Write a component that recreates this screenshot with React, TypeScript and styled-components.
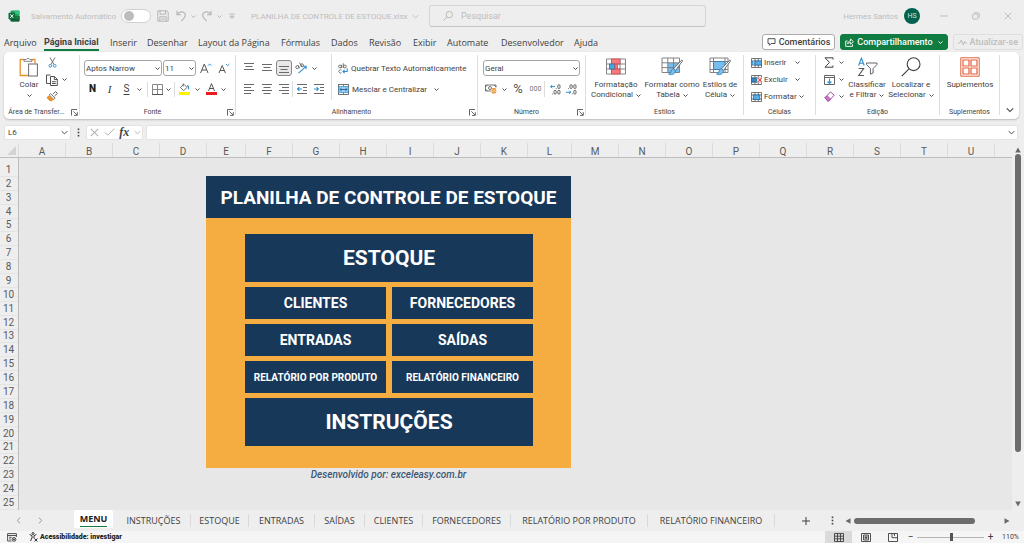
import React from "react";
import styled, { createGlobalStyle, css } from "styled-components";

const ui = `"Open Sans", "Noto Sans", sans-serif`;
const compact = `Roboto, "Open Sans", sans-serif`;

const c = {
  chrome: "#eeeeee",
  sheet: "#e7e7e7",
  line: "#bdbdbd",
  soft: "#dcdcdc",
  text: "#3f3f3f",
  faded: "#bdbdbd",
  green: "#107c41",
  navy: "#18385a",
  orange: "#f5ad41",
  blue: "#2f8fd0",
};

const Global = createGlobalStyle`
  *, *::before, *::after { box-sizing: border-box; }
  html, body { margin: 0; background: ${c.chrome}; }
  body { font-family: ${compact}; font-size: 8px; color: ${c.text}; }
  button, input, select { font: inherit; color: inherit; margin: 0; padding: 0; }
  button { background: none; border: 0; cursor: pointer; }
  svg { display: block; flex: none; }
`;

const Window = styled.div`
  display: flex;
  flex-direction: column;
  min-height: 100vh;
  overflow: hidden;
`;

/* ---------- title bar ---------- */
const TitleBar = styled.header`
  display: flex;
  align-items: center;
  height: 32px;
  padding: 0 8px;
  color: ${c.faded};
`;
const AutoSave = styled.label`
  display: flex;
  align-items: center;
  justify-content: space-between;
  width: 120px;
  margin-left: 11px;
`;
const Switch = styled.input`
  appearance: none;
  width: 30px;
  height: 14px;
  border: 1px solid #d0d0d0;
  border-radius: 7px;
  background: #fff;
  &::before {
    content: "";
    display: block;
    width: 10px;
    height: 10px;
    margin: 1px 2px;
    border-radius: 50%;
    background: #bcbcbc;
  }
`;
const QuickTools = styled.div`
  display: flex;
  align-items: center;
  width: 100px;
  color: #b4b4b4;
`;
const FileName = styled.button`
  display: flex;
  align-items: center;
  gap: 4px;
  width: 178px;
  white-space: nowrap;
`;
const Search = styled.label`
  display: flex;
  align-items: center;
  gap: 8px;
  width: 277px;
  height: 22px;
  padding: 0 13px;
  border: 1px solid #d6d6d6;
  border-bottom-color: #c4c4c4;
  border-radius: 3px;
  color: #b4b4b4;
  input {
    flex: 1;
    min-width: 0;
    border: 0;
    background: none;
    outline: 0;
    font-size: 9px;
  }
  input::placeholder { color: ${c.faded}; opacity: 1; }
`;
const Account = styled.button`
  display: flex;
  align-items: center;
  gap: 6px;
  margin-left: auto;
`;
const Avatar = styled.span`
  display: grid;
  place-items: center;
  width: 16px;
  height: 16px;
  border-radius: 50%;
  background: #03624f;
  color: #cfe6df;
  font-size: 7px;
`;
const WindowButton = styled.button`
  display: grid;
  place-items: center;
  width: 32px;
  height: 24px;
`;
const WindowButtons = styled.div`
  display: flex;
  margin: 0 -8px 0 8px;
`;

/* ---------- ribbon tabs ---------- */
const TabBar = styled.nav`
  display: flex;
  align-items: center;
  height: 20px;
  padding: 0 1px 0 4px;
  font-family: ${ui};
  font-size: 9px;
`;
const RibbonTab = styled.button<{ $w: number; $on?: boolean }>`
  width: ${(p) => p.$w}px;
  height: 20px;
  text-align: left;
  white-space: nowrap;
  ${(p) => p.$on && css`font-family: ${compact}; font-weight: 700;`}
  span {
    display: inline-block;
    height: 17px;
    line-height: 17px;
    margin-top: 1px;
    border-bottom: 2px solid ${(p) => (p.$on ? c.green : "transparent")};
  }
`;
const TabActions = styled.div`
  display: flex;
  gap: 5px;
  margin-left: auto;
  font-family: ${compact};
`;
const ActionButton = styled.button<{ $kind?: "primary" | "muted" }>`
  display: flex;
  align-items: center;
  gap: 3px;
  height: 16px;
  padding: 0 4px;
  border: 1px solid #ababab;
  border-radius: 3px;
  background: #fff;
  white-space: nowrap;
  font-weight: 500;
  svg:last-child:not(:first-child) { margin-left: 2px; }
  ${(p) => p.$kind === "primary" && css`
    background: ${c.green};
    border-color: ${c.green};
    color: #fff;
  `}
  ${(p) => p.$kind === "muted" && css`
    background: none;
    border-color: #dedede;
    color: ${c.faded};
  `}
`;

/* ---------- ribbon ---------- */
const Ribbon = styled.section`
  display: flex;
  height: 67px;
  margin: 0 5px 0 4px;
  border-radius: 5px;
  background: #fff;
  box-shadow: 0 1px 2px rgba(0, 0, 0, 0.22);
`;
const Group = styled.section<{ $w: number }>`
  display: flex;
  flex-direction: column;
  flex: none;
  width: ${(p) => p.$w}px;
  position: relative;
  &::after {
    content: "";
    position: absolute;
    right: 0;
    top: 3px;
    bottom: 4px;
    width: 1px;
    background: #dedede;
  }
`;
const GroupBody = styled.div<{ $pad?: number }>`
  display: flex;
  height: 53px;
  padding: 2px 0 0 ${(p) => p.$pad ?? 0}px;
`;
const GroupLabel = styled.footer`
  display: flex;
  align-items: center;
  height: 14px;
  padding-right: 1px;
  font-size: 7px;
  line-height: 14px;
  span { flex: 1; text-align: center; white-space: nowrap; }
`;
const Launcher = styled.button`
  display: grid;
  place-items: center;
  width: 10px;
  height: 12px;
  color: #555;
`;
/* Two-row groups sit lower than the dense three-row ones. */
const Stack = styled.div<{ $dense?: boolean; $pad?: number }>`
  display: flex;
  flex-direction: column;
  gap: ${(p) => (p.$dense ? 0 : 1)}px;
  padding: ${(p) => (p.$dense ? 0 : 4)}px 0 0 ${(p) => p.$pad ?? 0}px;
`;
const Row = styled.div<{ $h?: number }>`
  display: flex;
  align-items: center;
  height: ${(p) => p.$h ?? 20}px;
`;
const Tool = styled.button<{ $w?: number; $on?: boolean }>`
  display: flex;
  align-items: center;
  justify-content: center;
  width: ${(p) => p.$w ?? 18}px;
  height: 16px;
  border-radius: 3px;
  ${(p) => p.$on && css`
    border: 1px solid #8a8a8a;
    background: #e8e8e8;
  `}
`;
const Letter = styled.span<{ $kind?: "bold" | "italic" | "underline" | "percent" | "zeros" }>`
  font-size: 10px;
  line-height: 12px;
  ${(p) => p.$kind === "bold" && css`font-weight: 900; color: #222;`}
  ${(p) => p.$kind === "italic" && css`font-family: "Liberation Serif", serif; font-style: italic; font-size: 11px;`}
  ${(p) => p.$kind === "underline" && css`text-decoration: underline; text-underline-offset: 2px;`}
  ${(p) => p.$kind === "percent" && css`font-size: 13px; color: #555;`}
  ${(p) => p.$kind === "zeros" && css`font-size: 7px; color: #777;`}
`;
const Divider = styled.span<{ $h?: number; $tight?: boolean }>`
  width: 1px;
  height: ${(p) => p.$h ?? 15}px;
  margin: 0 4px 0 ${(p) => (p.$tight ? 0 : 4)}px;
  background: #dcdcdc;
`;
const TextTool = styled.button<{ $w: number; $dense?: boolean }>`
  display: flex;
  align-items: center;
  gap: ${(p) => (p.$dense ? 2 : 3)}px;
  height: ${(p) => (p.$dense ? 17 : 20)}px;
  width: ${(p) => p.$w}px;
  white-space: nowrap;
  svg:last-child:not(:first-child) { margin-left: auto; }
`;
const BigTool = styled.button<{ $w: number }>`
  display: flex;
  flex-direction: column;
  align-items: center;
  width: ${(p) => p.$w}px;
  padding-top: 3px;
  line-height: 10px;
  white-space: nowrap;
  > svg { height: 20px; margin-bottom: 3px; }
  span { display: flex; align-items: center; justify-content: center; gap: 3px; height: 10px; }
`;
const SelectBox = styled.label<{ $w: number }>`
  position: relative;
  display: block;
  width: ${(p) => p.$w}px;
  margin-right: 1px;
  select {
    appearance: none;
    display: block;
    width: 100%;
    height: 16px;
    padding: 0 12px 0 1px;
    border: 1px solid #a6a6a6;
    border-radius: 3px;
    background: #fff;
  }
  svg { position: absolute; right: 2px; top: 6px; pointer-events: none; }
`;
const Collapse = styled.button`
  align-self: flex-end;
  display: grid;
  place-items: center;
  width: 20px;
  height: 18px;
  margin-left: auto;
`;

/* ---------- formula bar ---------- */
const FormulaBar = styled.div`
  display: flex;
  align-items: center;
  gap: 3px;
  height: 24px;
  padding: 2px 6px 0 4px;
`;
const Field = styled.div<{ $w?: number }>`
  display: flex;
  align-items: center;
  justify-content: space-between;
  height: 15px;
  padding: 0 2px 0 3px;
  border: 1px solid #e3e3e3;
  border-radius: 2px;
  background: #fff;
  ${(p) => (p.$w ? `width: ${p.$w}px;` : "flex: 1;")}
  input {
    flex: 1;
    min-width: 0;
    border: 0;
    outline: 0;
    background: none;
  }
`;
const FormulaActions = styled(Field)`
  padding: 0 1px 0 3px;
  color: #b3b3b3;
`;
const Grip = styled.span`
  display: grid;
  place-items: center;
  width: 9px;
`;
const Fx = styled.span`
  font: italic 700 12px/12px "Liberation Serif", serif;
  color: #444;
`;

/* ---------- worksheet ---------- */
const Workspace = styled.main`
  display: flex;
  flex: 1;
`;
const Sheet = styled.div`
  flex: 1;
  min-width: 0;
  display: flex;
  flex-direction: column;
`;
const ColumnHeads = styled.div`
  display: flex;
  height: 15px;
  border-bottom: 1px solid ${c.line};
  overflow: hidden;
  font-size: 10px;
  line-height: 17px;
  color: #5a5a5a;
`;
const Corner = styled.div`
  display: flex;
  align-items: center;
  justify-content: flex-end;
  flex: none;
  width: 19px;
  padding-right: 2px;
  border-right: 1px solid ${c.soft};
`;
const ColumnHead = styled.div<{ $w: number }>`
  flex: none;
  width: ${(p) => p.$w}px;
  border-right: 1px solid ${c.soft};
  text-align: center;
`;
const Body = styled.div`
  display: flex;
  flex: 1;
`;
const RowHeads = styled.div`
  display: flex;
  flex-direction: column;
  width: 19px;
  padding-top: 5px;
  border-right: 1px solid ${c.line};
  font-size: 10px;
  color: #5a5a5a;
`;
const RowHead = styled.div`
  display: flex;
  flex: 1;
  align-items: center;
  justify-content: center;
  min-height: 13px;
  padding-right: 1px;
  border-bottom: 1px solid #e4e4e4;
`;
const Cells = styled.div`
  flex: 1;
  padding: 18px 0 0 187px;
  background: ${c.sheet};
`;
const Panel = styled.section`
  width: 365px;
  background: ${c.orange};
`;
const PanelTitle = styled.h1`
  margin: 0;
  height: 42px;
  line-height: 44px;
  background: ${c.navy};
  color: #fff;
  text-align: center;
  font-size: 19px;
  font-weight: 700;
  white-space: nowrap;
`;
const PanelGrid = styled.nav`
  display: grid;
  grid-template-columns: 1fr 1fr;
  gap: 5px 6px;
  padding: 16px 38px 22px 39px;
`;
const PanelButton = styled.button<{ $size: "large" | "medium" | "small" }>`
  background: ${c.navy};
  color: #fff;
  font-weight: 700;
  height: 32px;
  font-size: ${(p) => ({ large: 21, medium: 14, small: 10 })[p.$size]}px;
  white-space: nowrap;
  ${(p) => p.$size === "large" && css`grid-column: 1 / -1; height: 48px;`}
`;
const Credit = styled.p`
  width: 365px;
  margin: 0;
  text-align: center;
  font-size: 10px;
  line-height: 14px;
  font-style: italic;
  font-weight: 500;
  color: #3c5775;
`;
const VScroll = styled.div`
  display: flex;
  flex-direction: column;
  align-items: center;
  width: 12px;
  padding: 4px 0 3px;
  color: #686868;
`;
const VTrack = styled.div`
  flex: 1;
  width: 6px;
  margin: 1px 0;
`;
const VThumb = styled.div`
  width: 6px;
  height: 86%;
  border-radius: 3px;
  background: #6c6c6c;
`;

/* ---------- sheet tabs ---------- */
const SheetBar = styled.nav`
  display: flex;
  align-items: center;
  height: 21px;
  padding: 0 14px 0 13px;
  font-family: ${ui};
  font-size: 9px;
`;
const Arrow = styled.button`
  display: grid;
  place-items: center;
  width: 10px;
  height: 14px;
  margin-right: 12px;
  color: #9a9a9a;
`;
const SheetTab = styled.button<{ $w: number; $on?: boolean }>`
  width: ${(p) => p.$w}px;
  height: 13px;
  line-height: 13px;
  border-right: 1px solid #d9d9d9;
  white-space: nowrap;
  ${(p) => p.$on && css`
    align-self: flex-start;
    height: 18px;
    margin: 0 4px 0 17px;
    border: 0;
    border-radius: 2px;
    background: #fff;
    font-weight: 700;
    color: #222;
    span { display: inline-block; height: 15px; border-bottom: 1px solid ${c.green}; }
  `}
`;
const HScroll = styled.div`
  display: flex;
  align-items: center;
  gap: 3px;
  width: 165px;
  color: #686868;
`;
const HTrack = styled.div`flex: 1;`;
const HThumb = styled.div`
  width: 82%;
  height: 6px;
  border-radius: 3px;
  background: #6c6c6c;
`;
const BarButton = styled.button`
  display: grid;
  place-items: center;
  width: 26px;
  height: 14px;
`;
const SheetTools = styled.div`
  display: flex;
  align-items: center;
  margin-left: auto;
`;

/* ---------- status bar ---------- */
const StatusBar = styled.footer`
  display: flex;
  align-items: center;
  height: 12px;
  padding: 0 5px 0 7px;
  background: #f5f5f5;
`;
const Accessibility = styled.button`
  display: flex;
  align-items: center;
  gap: 2px;
  margin-left: 12px;
  font-size: 7px;
  font-weight: 900;
  color: #222;
`;
const Views = styled.div`
  display: flex;
  margin-left: auto;
`;
const ViewButton = styled.button<{ $on?: boolean }>`
  display: grid;
  place-items: center;
  width: 27px;
  height: 12px;
  background: ${(p) => (p.$on ? "#dadada" : "none")};
`;
const Zoom = styled.div`
  display: flex;
  align-items: center;
  gap: 2px;
  font-size: 7px;
  input {
    appearance: none;
    width: 67px;
    height: 10px;
    background: linear-gradient(#b4b4b4, #b4b4b4) center / 100% 1px no-repeat;
  }
  input::-webkit-slider-thumb {
    appearance: none;
    width: 3px;
    height: 8px;
    background: #555;
  }
`;
const ZoomStep = styled.button`
  width: 9px;
  line-height: 10px;
  font-size: 10px;
`;
const ZoomValue = styled.output`
  width: 22px;
  text-align: right;
`;

/* ---------- icons ---------- */
const line = { fill: "none", stroke: "currentColor", strokeWidth: 1 } as const;

const Chevron = ({ s = 5 }: { s?: number }) => (
  <svg width={s} height={s} viewBox="0 0 6 6" {...line}><path d="M.6 1.8 3 4.2 5.4 1.8" strokeWidth={s > 6 ? 0.8 : 1.1} /></svg>
);
const Triangle = ({ d }: { d: string }) => (
  <svg width="6" height="6" viewBox="0 0 6 6" fill="currentColor"><path d={d} /></svg>
);
const LauncherIcon = () => (
  <svg width="7" height="7" viewBox="0 0 7 7" {...line} strokeWidth={0.9}>
    <path d="M.5 6.5V.5h5.5M2.4 2.4 6 6M6.3 3.2v3.2H3.1" />
  </svg>
);
const ExcelLogo = () => (
  <svg width="12" height="12" viewBox="0 0 12 12">
    <rect x="2.5" y=".5" width="9" height="11" rx="1" fill="#21a366" />
    <path d="M7 .5h3.5a1 1 0 0 1 1 1V4H7z" fill="#33c481" />
    <path d="M2.5 6.2h9v4.3a1 1 0 0 1-1 1h-7a1 1 0 0 1-1-1z" fill="#185c37" />
    <path d="M7 6.2h4.5V9H7z" fill="#107c41" />
    <rect x=".5" y="2.8" width="6.6" height="6.6" rx=".8" fill="#0b6b38" />
    <path d="m2.3 4.3 3 3.6m0-3.6-3 3.6" stroke="#fff" strokeWidth="1" />
  </svg>
);
const SaveIcon = () => (
  <svg width="12" height="12" viewBox="0 0 12 12" {...line}>
    <path d="M.8.8h9l1.4 1.4v9H.8zM3 .8v3.4h5.6V.8M2.8 11.2V6.8h6.4v4.4M4 9h4" />
  </svg>
);
const UndoIcon = ({ flip }: { flip?: boolean }) => (
  <svg width="11" height="12" viewBox="0 0 11 12" {...line} strokeWidth={1.1}>
    <path d={flip ? "M10 .8v4H6M10 4.6C7.8 1.2 3.8 1.2 2.2 3.4.8 5.6 2 7.8 5.6 11" : "M1 .8v4h4M1 4.6C3.2 1.2 7.2 1.2 8.8 3.4 10.2 5.6 9 7.8 5.4 11"} />
  </svg>
);
const CustomizeIcon = () => (
  <svg width="6" height="7" viewBox="0 0 6 7" {...line}><path d="M.5 1h5M1 3.2l2 2.2 2-2.2z" /></svg>
);
const SearchIcon = ({ size = 10 }: { size?: number }) => (
  <svg width={size} height={size} viewBox="0 0 20 20" {...line} strokeWidth={size > 12 ? 1.1 : 1.8}>
    <circle cx="12.6" cy="7.2" r="6.4" /><path d="M8 11.8.8 19.2" />
  </svg>
);
const RestoreIcon = () => (
  <svg width="8" height="8" viewBox="0 0 8 8" {...line}>
    <rect x=".7" y="2" width="5.2" height="5.2" rx="1" /><path d="M2.4.8h3.2A1.7 1.7 0 0 1 7.3 2.5V5.6" />
  </svg>
);
const CloseIcon = ({ s = 7 }: { s?: number }) => (
  <svg width={s} height={s} viewBox="0 0 8 8" {...line}><path d="m.7.7 6.6 6.6m0-6.6L.7 7.3" /></svg>
);
const CommentIcon = () => (
  <svg width="9" height="8" viewBox="0 0 8 8" {...line} strokeWidth={0.9}><path d="M.5.7h7v4.8H3.6L1.9 7.3V5.5H.5z" /></svg>
);
const ShareIcon = () => (
  <svg width="9" height="9" viewBox="0 0 9 9" {...line} strokeWidth={0.9}>
    <path d="M2.6 3H.7v5.4h6.8V6.2M2.6 6C2.8 4 4 3 5.6 3V1l2.8 2.7-2.8 2.5V4.6C4.2 4.5 3.3 5 2.6 6z" />
  </svg>
);
const PulseIcon = () => (
  <svg width="9" height="7" viewBox="0 0 9 7" {...line}><path d="M0 4h1.8L3.3 1l2 5 1.4-3.5L7.4 4H9" /></svg>
);
const PasteIcon = () => (
  <svg width="20" height="20" viewBox="0 0 20 20" fill="none">
    <path d="M5 2.5H1.2v16H10M13 2.5h3v4" stroke="#e8912d" strokeWidth="1.3" />
    <path d="M5 4.3V2.5h2.2a2 2 0 0 1 3.6 0H13v1.8z" fill="#fff" stroke="#777" strokeWidth=".9" />
    <rect x="9.6" y="7" width="8.8" height="12" fill="#fff" stroke="#6b6b6b" strokeWidth="1" />
  </svg>
);
const CutIcon = () => (
  <svg width="9" height="11" viewBox="0 0 9 11" fill="none" strokeWidth=".9">
    <path d="M2 .5 6 7.5M7 .5 3 7.5" stroke="#666" />
    <circle cx="2.3" cy="8.8" r="1.4" stroke={c.blue} /><circle cx="6.7" cy="8.8" r="1.4" stroke={c.blue} />
  </svg>
);
const CopyIcon = () => (
  <svg width="12" height="12" viewBox="0 0 12 12" {...line} strokeWidth={0.9}>
    <path d="M4.5 9.5h-4V1h4M4.5 2.5h4l2.8 2.8v6.2H4.5zM8.3 2.6v2.9h3M6 7.7h3.8M6 9.5h3.8" />
  </svg>
);
const BrushIcon = () => (
  <svg width="12" height="11" viewBox="0 0 12 11" fill="none">
    <path d="M6.8 3.2 9.6.6l1.8 1.8-2.8 2.6" stroke="#666" strokeWidth="1" />
    <path d="M4.5 2.6 9.2 7.2l-1.4 1.2L3.2 3.9z" fill="#fff" stroke="#666" strokeWidth=".9" />
    <path d="M3.2 4.2 7.6 8.5 5.4 10.6C3.5 10 1.5 8.5.6 6.3z" fill="#e8912d" />
  </svg>
);
const GrowFont = ({ down }: { down?: boolean }) => (
  <svg width="12" height="11" viewBox="0 0 12 11" fill="none">
    <path d={down ? "M1 10 4.2 2.5 7.4 10M2.2 7.5h4" : "M.6 10 4.3 1 8 10M2 7h4.6"} stroke="#555" strokeWidth="1" />
    <path d={down ? "m8 1 1.7 1.7L11.4 1" : "m8 2.7 1.7-1.7 1.7 1.7"} stroke={c.blue} strokeWidth="1" />
  </svg>
);
const BordersIcon = () => (
  <svg width="11" height="11" viewBox="0 0 11 11" {...line}>
    <path d="M.5.5h10v10H.5zM5.5.5v10M.5 5.5h10" stroke="#888" /><path d="M0 10.5h11" stroke="#555" />
  </svg>
);
const FillIcon = () => (
  <svg width="11" height="12" viewBox="0 0 11 12" fill="none">
    <path d="M4.8 1.2 8 4.4 4.6 7.6 1.4 4.4zM4.2.4v3" stroke="#666" strokeWidth=".9" />
    <path d="M8.2 2.2c1.2.6 1.6 1.8 1.3 4.2" stroke={c.blue} strokeWidth="1.2" />
    <rect y="9" width="11" height="3" fill="#fff200" />
  </svg>
);
const FontColorIcon = () => (
  <svg width="11" height="12" viewBox="0 0 11 12" fill="none">
    <path d="M2.5 8 5.5.6 8.5 8M3.6 5.5h3.8" stroke="#555" strokeWidth="1" />
    <rect y="9" width="11" height="3" fill="#f01818" />
  </svg>
);
const Lines = ({ rows }: { rows: [number, number, number][] }) => (
  <svg width="10" height="10" viewBox="0 0 10 10" fill="none" stroke="#6a6a6a" strokeWidth="1">
    <path d={rows.map(([y, a, b]) => `M${a} ${y}H${b}`).join("")} />
  </svg>
);
const OrientationIcon = () => (
  <svg width="12" height="12" viewBox="0 0 12 12" fill="none">
    <g stroke="#666" strokeWidth=".9"><circle cx="2.3" cy="5.2" r="1.5" /><path d="M3 3.2l1.6 3M4.5.6l2.7 4.6" /><circle cx="7" cy="3.2" r="1.4" /></g>
    <path d="M3.5 11.2 10.8 4.6M8 4.3h3.1v3" stroke={c.blue} strokeWidth="1.1" />
  </svg>
);
const IndentIcon = ({ out }: { out?: boolean }) => (
  <svg width="10" height="10" viewBox="0 0 10 10" fill="none">
    <path d="M0 .5h10M6 3.5h4M6 6.5h4M0 9.5h10" stroke="#6a6a6a" strokeWidth="1" />
    <path d={out ? "M5 5H.6M2.4 3.2.6 5l1.8 1.8" : "M0 5h4.4M2.6 3.2 4.4 5 2.6 6.8"} stroke={c.blue} strokeWidth="1.1" />
  </svg>
);
const WrapIcon = () => (
  <svg width="10" height="11" viewBox="0 0 10 11" fill="none">
    <g stroke="#666" strokeWidth=".9"><circle cx="2" cy="3.5" r="1.4" /><path d="M3.6 1.8v3.3M5.3.3v4.8" /><circle cx="6.9" cy="3.5" r="1.4" /><path d="M3.5 7.2a1.6 1.6 0 1 0 0 2.5" /></g>
    <path d="M9.2 5.5v3H5M6.6 6.8 5 8.5l1.6 1.7" stroke={c.blue} strokeWidth="1.1" />
  </svg>
);
const MergeIcon = () => (
  <svg width="11" height="11" viewBox="0 0 11 11" fill="none">
    <rect x=".5" y=".5" width="10" height="10" stroke="#666" strokeWidth=".9" />
    <path d="M5.5.5v2M5.5 8.5v2" stroke="#666" strokeWidth=".9" />
    <rect x=".9" y="2.6" width="9.2" height="5.8" fill="#9ed0f2" stroke="#2f8fd0" strokeWidth=".7" />
    <path d="M2 5.5h7M3.6 4 2 5.5 3.6 7M7.4 4 9 5.5 7.4 7" stroke="#1b5f92" strokeWidth=".9" />
  </svg>
);
const CurrencyIcon = () => (
  <svg width="12" height="10" viewBox="0 0 12 10" fill="none">
    <path d="M6 7H.5V1H11v2.5M2.5 1 .5 3M2.5 7 .5 5M9 1l2 2" stroke="#666" strokeWidth=".9" /><circle cx="5" cy="4" r="1.5" stroke="#666" strokeWidth=".9" />
    <path d="M6.5 5c0-1.3 4.7-1.3 4.7 0v3.5c0 1.3-4.7 1.3-4.7 0z" fill="#ee9433" />
    <path d="M6.5 5.3c0 1 4.7 1 4.7 0M6.5 7c0 1 4.7 1 4.7 0" stroke="#fff" strokeWidth=".5" />
  </svg>
);
const Zero = ({ x, y }: { x: number; y: number }) => <rect x={x} y={y} width="2.2" height="3.8" rx="1.1" />;
const DecimalIcon = ({ less }: { less?: boolean }) => (
  <svg width="11" height="11" viewBox="0 0 11 11" fill="none">
    <g stroke="#555" strokeWidth=".9">
      <Zero x={7.8} y={0.7} />
      <Zero x={7.8} y={6.3} />
      <Zero x={4} y={less ? 0.7 : 6.3} />
      <path d={less ? "M2 4.5h.8M5.8 10h.8" : "M5.8 4.5h.8M2 10h.8"} />
    </g>
    <path d={less ? "M0 8.3h4.8M3.2 6.7l1.6 1.6-1.6 1.6" : "M5 2.6H.5M2.2 1 .6 2.6l1.6 1.6"} stroke={c.blue} strokeWidth="1" />
  </svg>
);
const ConditionalIcon = () => (
  <svg width="20" height="18" viewBox="0 0 20 18" fill="none">
    <path d="M.5 1h19v15H.5zM.5 6h19M.5 11h19M5.5 1v15M14 1v15" stroke="#777" strokeWidth=".9" />
    <path d="M5.5 1H14v5H5.5zM5.5 11H14v5H5.5z" fill="#f57c7e" stroke="#d9454a" strokeWidth=".8" />
    <path d="M3.5 6H9v5H3.5z" fill="#4fa6e0" stroke="#2272ad" strokeWidth=".8" />
    <path d="M9 6h2.5v5H9z" fill="#f57c7e" stroke="#d9454a" strokeWidth=".8" />
  </svg>
);
const Paint = () => (
  <g>
    <path d="M20.5 3.2 12.8 11.6l1.7 1.8L21.4 4.2c.4-.7-.3-1.5-.9-1z" fill="#fff" stroke="#5f5f5f" strokeWidth=".9" />
    <path d="M12.5 11.8c-2 .2-2.4 1.6-2.6 3-.2 1.3-1 1.9-2.4 2.2 2.6 1.3 6.6.6 7-3.2z" fill="#7cc0ee" stroke="#2779b5" strokeWidth=".8" />
  </g>
);
const TableFormatIcon = () => (
  <svg width="22" height="20" viewBox="0 0 22 20" fill="none">
    <path d="M6.8 6h11.5v9.5H6.8z" fill="#79bdec" />
    <path d="M1 1h17.5v14.5H1zM1 5.8h17.5M1 10.6h17.5M6.8 1v14.5M12.6 1v14.5" stroke="#777" strokeWidth=".9" />
    <Paint />
  </svg>
);
const CellStyleIcon = () => (
  <svg width="22" height="20" viewBox="0 0 22 20" fill="none">
    <path d="M1 1h18v14.5H1zM4.5 1v14.5M16 1v14.5M1 4.5h18M1 12.5h18" stroke="#777" strokeWidth=".9" />
    <path d="M4.5 4.5H16v8H4.5z" fill="#79bdec" stroke="#2779b5" strokeWidth=".8" />
    <Paint />
  </svg>
);
const CellsIcon = ({ kind }: { kind: "insert" | "delete" | "format" }) => (
  <svg width="11" height="10" viewBox="0 0 11 10" fill="none">
    <path d="M.5.5h10v9H.5zM.5 3h10M.5 7h10M4 .5v9M7.3.5v9" stroke="#555" strokeWidth=".8" />
    {kind === "insert" && <><rect x="4" y="3" width="6.5" height="4" fill="#58aee6" stroke="#1d6ea8" strokeWidth=".7" /><path d="M5.2 5H0M2 3.2.2 5 2 6.8" stroke={c.blue} strokeWidth="1.1" /></>}
    {kind === "delete" && <><rect x=".8" y="3" width="5.5" height="4" fill="#3b87bd" stroke="#1d5f92" strokeWidth=".7" /><path d="M6.3 2.5H11v5H6.3z" fill="#fff" /><path d="m7 3 3.6 4M10.6 3 7 7" stroke="#e03a3a" strokeWidth="1.1" /></>}
    {kind === "format" && <rect x="2.3" y="3" width="6.5" height="4.6" fill="#58aee6" stroke="#1d6ea8" strokeWidth=".8" />}
  </svg>
);
const SigmaIcon = () => (
  <svg width="10" height="11" viewBox="0 0 10 11" {...line}><path d="M9 2.5V.8H1l4.5 4.6L1 10.2h8V8.5" /></svg>
);
const FillDownIcon = () => (
  <svg width="11" height="10" viewBox="0 0 11 10" fill="none">
    <path d="M.5.5h10v9H.5zM.5 2.5h10" stroke="#555" strokeWidth=".9" /><path d="M5.5 3.5v4.8M3.6 6.5l1.9 1.9 1.9-1.9" stroke={c.blue} strokeWidth="1.1" />
  </svg>
);
const EraserIcon = () => (
  <svg width="11" height="11" viewBox="0 0 11 11" fill="none">
    <path d="m1 6.7 5.5-5.8 3.7 3.3-5.6 5.9H3.8z" stroke="#a349a4" strokeWidth="1" fill="#fff" /><path d="m1 6.7 2-2 3.7 3.3-2.1 2.1H3.8z" fill="#c77dc8" stroke="#a349a4" strokeWidth=".9" />
  </svg>
);
const SortFilterIcon = () => (
  <svg width="21" height="20" viewBox="0 0 21 20" fill="none">
    <path d="M1.6 8.5 4.4 1.2l2.8 7.3M2.5 6.2h3.8" stroke={c.blue} strokeWidth="1.1" />
    <path d="M1.7 11.5h5L1.7 18.5h5.2" stroke="#555" strokeWidth="1.1" />
    <path d="M9.5 6H20v1.5l-3.9 4V16l-2.7 1.2v-5.7l-3.9-4z" stroke="#666" strokeWidth="1" />
  </svg>
);
const AddinsIcon = () => (
  <svg width="20" height="20" viewBox="0 0 20 20" fill="none" stroke="#e2603c" strokeWidth="1.2">
    <path d="M.8.8h18.400v18.400H.8z" strokeWidth="1" /><path d="M3 3h6v6H3zM11 3h6v6h-6zM3 11h6v6H3zM11 11h6v6h-6z" />
  </svg>
);
const DotsIcon = () => (
  <svg width="3" height="9" viewBox="0 0 3 9" fill="#444"><rect x=".7" y=".5" width="1.6" height="1.6" /><rect x=".7" y="3.7" width="1.6" height="1.6" /><rect x=".7" y="6.9" width="1.6" height="1.6" /></svg>
);
const CheckIcon = () => (
  <svg width="11" height="8" viewBox="0 0 11 8" {...line}><path d="m.6 4.2 3.2 3L10.4.7" /></svg>
);
const SideArrow = ({ right }: { right?: boolean }) => (
  <svg width="5" height="7" viewBox="0 0 5 7" {...line}><path d={right ? "m.8.6 3 2.9-3 2.9" : "m4.2.6-3 2.9 3 2.9"} /></svg>
);
const PlusIcon = () => (
  <svg width="8" height="8" viewBox="0 0 8 8" {...line}><path d="M4 0v8M0 4h8" /></svg>
);
const MacroIcon = () => (
  <svg width="10" height="9" viewBox="0 0 10 9" {...line} strokeWidth={0.9}>
    <path d="M4.5 8H.6V.6h8.8V4M.6 2.5h8.8M2.2 4.3h2.5M2.2 6h1.6" /><circle cx="7" cy="6.4" r="1.9" /><circle cx="7" cy="6.4" r=".6" fill="currentColor" />
  </svg>
);
const PersonIcon = () => (
  <svg width="9" height="10" viewBox="0 0 9 10" {...line} strokeWidth={0.9}>
    <circle cx="4" cy="1.5" r="1" /><path d="M.6 2.5 3 3.6v2L1.6 9M7.4 2.5 5 3.6v2l.3 1M4 6v-.5" /><path d="m5.5 6.5 3 3m0-3-3 3" />
  </svg>
);
const ViewIcon = ({ kind }: { kind: "grid" | "page" | "break" }) => (
  <svg width="10" height="9" viewBox="0 0 10 9" {...line} strokeWidth={0.9}>
    <path d="M.5.5h9v8h-9z" />
    {kind === "grid" && <path d="M.5 3.2h9M.5 5.8h9M3.5.5v8M6.5.5v8" />}
    {kind === "page" && <path d="M2.5 2h5v5h-5zM3.5 3.2h3M3.5 4.5h3M3.5 5.8h3" />}
    {kind === "break" && <path d="M4 .5v4.2h5.5M6.5.5v2.5" />}
  </svg>
);

/* ---------- data ---------- */
const ribbonTabs: [string, number][] = [
  ["Arquivo", 40], ["Página Inicial", 66], ["Inserir", 37], ["Desenhar", 51], ["Layout da Página", 83], ["Fórmulas", 50],
  ["Dados", 38], ["Revisão", 44], ["Exibir", 34], ["Automate", 54], ["Desenvolvedor", 73], ["Ajuda", 30],
];
const columns = "ABCDEFGHIJKLMNOPQRSTU".split("");
const columnWidth = (name: string) => (name === "E" ? 39 : name === "L" ? 44 : 47);
const panelButtons: [string, "large" | "medium" | "small"][] = [
  ["ESTOQUE", "large"], ["CLIENTES", "medium"], ["FORNECEDORES", "medium"], ["ENTRADAS", "medium"], ["SAÍDAS", "medium"],
  ["RELATÓRIO POR PRODUTO", "small"], ["RELATÓRIO FINANCEIRO", "small"], ["INSTRUÇÕES", "large"],
];
const sheetTabs: [string, number][] = [
  ["INSTRUÇÕES", 74], ["ESTOQUE", 58], ["ENTRADAS", 66], ["SAÍDAS", 50], ["CLIENTES", 58], ["FORNECEDORES", 88],
  ["RELATÓRIO POR PRODUTO", 137], ["RELATÓRIO FINANCEIRO", 127],
];

const LaunchButton = ({ of }: { of: string }) => (
  <Launcher aria-label={`Opções de ${of}`}><LauncherIcon /></Launcher>
);
const Drop = ({ of, w = 9 }: { of: string; w?: number }) => (
  <Tool $w={w} aria-label={`Mais opções de ${of}`}><Chevron /></Tool>
);

export default function App() {
  return (
    <Window>
      <Global />
      <TitleBar>
        <ExcelLogo />
        <AutoSave>Salvamento Automático<Switch type="checkbox" role="switch" /></AutoSave>
        <QuickTools>
          <Tool $w={24} aria-label="Salvar"><SaveIcon /></Tool>
          <Tool $w={12} aria-label="Desfazer"><UndoIcon /></Tool>
          <Drop of="desfazer" w={13} />
          <Tool $w={13} aria-label="Refazer"><UndoIcon flip /></Tool>
          <Drop of="refazer" w={13} />
          <Tool $w={12} aria-label="Personalizar"><CustomizeIcon /></Tool>
        </QuickTools>
        <FileName>PLANILHA DE CONTROLE DE ESTOQUE.xlsx<Chevron s={7} /></FileName>
        <Search>
          <SearchIcon />
          <input type="search" placeholder="Pesquisar" aria-label="Pesquisar" />
        </Search>
        <Account>Hermes Santos<Avatar>HS</Avatar></Account>
        <WindowButtons>
          <WindowButton aria-label="Minimizar"><svg width="8" height="2" viewBox="0 0 8 2" {...line}><path d="M0 1h8" /></svg></WindowButton>
          <WindowButton aria-label="Restaurar"><RestoreIcon /></WindowButton>
          <WindowButton aria-label="Fechar"><CloseIcon s={8} /></WindowButton>
        </WindowButtons>
      </TitleBar>

      <TabBar>
        {ribbonTabs.map(([name, w]) => (
          <RibbonTab key={name} $w={w} $on={name === "Página Inicial"}><span>{name}</span></RibbonTab>
        ))}
        <TabActions>
          <ActionButton><CommentIcon />Comentários</ActionButton>
          <ActionButton $kind="primary"><ShareIcon />Compartilhamento<Chevron /></ActionButton>
          <ActionButton $kind="muted"><PulseIcon />Atualizar-se</ActionButton>
        </TabActions>
      </TabBar>

      <Ribbon>
        <Group $w={76}>
          <GroupBody $pad={8}>
            <BigTool $w={34}><PasteIcon /><span>Colar</span><span><Chevron /></span></BigTool>
            <Stack $dense>
              <Row $h={17}><Tool $w={12} aria-label="Recortar"><CutIcon /></Tool></Row>
              <Row $h={17}><Tool $w={12} aria-label="Copiar"><CopyIcon /></Tool><Drop of="copiar" w={13} /></Row>
              <Row $h={17}><Tool $w={12} aria-label="Pincel de formatação"><BrushIcon /></Tool></Row>
            </Stack>
          </GroupBody>
          <GroupLabel><span>Área de Transfer...</span><LaunchButton of="área de transferência" /></GroupLabel>
        </Group>

        <Group $w={156}>
          <GroupBody>
            <Stack $pad={4}>
              <Row>
                <SelectBox $w={78}><select aria-label="Fonte"><option>Aptos Narrow</option></select><Chevron /></SelectBox>
                <SelectBox $w={33}><select aria-label="Tamanho"><option>11</option></select><Chevron /></SelectBox>
                <Tool $w={18} aria-label="Aumentar fonte"><GrowFont /></Tool>
                <Tool $w={17} aria-label="Diminuir fonte"><GrowFont down /></Tool>
              </Row>
              <Row>
                <Tool $w={17} aria-label="Negrito"><Letter $kind="bold">N</Letter></Tool>
                <Tool $w={17} aria-label="Itálico"><Letter $kind="italic">I</Letter></Tool>
                <Tool $w={17} aria-label="Sublinhado"><Letter $kind="underline">S</Letter></Tool>
                <Drop of="sublinhado" w={8} /><Divider />
                <Tool $w={10} aria-label="Bordas"><BordersIcon /></Tool><Drop of="bordas" w={12} /><Divider $tight />
                <Tool $w={10} aria-label="Cor de preenchimento"><FillIcon /></Tool><Drop of="preenchimento" w={16} />
                <Tool $w={12} aria-label="Cor da fonte"><FontColorIcon /></Tool><Drop of="cor da fonte" w={12} />
              </Row>
            </Stack>
          </GroupBody>
          <GroupLabel><span>Fonte</span><LaunchButton of="fonte" /></GroupLabel>
        </Group>

        <Group $w={242}>
          <GroupBody>
            <Stack $pad={4}>
              <Row>
                <Tool aria-label="Alinhar em cima"><Lines rows={[[0.5, 0, 10], [3.5, 1.5, 8.5], [6.5, 0, 10]]} /></Tool>
                <Tool aria-label="Alinhar no meio"><Lines rows={[[1.5, 0, 10], [4.5, 1.5, 8.5], [7.5, 0, 10]]} /></Tool>
                <Tool $w={16} $on aria-label="Alinhar embaixo"><Lines rows={[[3.5, 0, 10], [6.5, 1.5, 8.5], [9.5, 0, 10]]} /></Tool>
                <Tool $w={18} aria-label="Orientação"><OrientationIcon /></Tool><Drop of="orientação" w={8} />
              </Row>
              <Row>
                <Tool aria-label="Alinhar à esquerda"><Lines rows={[[0.5, 0, 10], [3.5, 0, 7], [6.5, 0, 10], [9.5, 0, 7]]} /></Tool>
                <Tool aria-label="Centralizar"><Lines rows={[[0.5, 0, 10], [3.5, 1.5, 8.5], [6.5, 0, 10], [9.5, 1.5, 8.5]]} /></Tool>
                <Tool $w={16} aria-label="Alinhar à direita"><Lines rows={[[0.5, 0, 10], [3.5, 3, 10], [6.5, 0, 10], [9.5, 3, 10]]} /></Tool>
                <Divider $h={16} $tight />
                <Tool $w={10} aria-label="Diminuir recuo"><IndentIcon out /></Tool>
                <Tool $w={24} aria-label="Aumentar recuo"><IndentIcon /></Tool>
              </Row>
            </Stack>
            <Divider $h={46} $tight />
            <Stack $pad={2}>
              <TextTool $w={132}><WrapIcon />Quebrar Texto Automaticamente</TextTool>
              <TextTool $w={101}><MergeIcon />Mesclar e Centralizar<Chevron /></TextTool>
            </Stack>
          </GroupBody>
          <GroupLabel><span>Alinhamento</span><LaunchButton of="alinhamento" /></GroupLabel>
        </Group>

        <Group $w={108}>
          <GroupBody>
            <Stack $pad={5}>
              <Row><SelectBox $w={97}><select aria-label="Formato de número"><option>Geral</option></select><Chevron /></SelectBox></Row>
              <Row>
                <Tool $w={16} aria-label="Moeda"><CurrencyIcon /></Tool><Drop of="moeda" w={10} />
                <Tool $w={18} aria-label="Porcentagem"><Letter $kind="percent">%</Letter></Tool>
                <Tool $w={17} aria-label="Milhares"><Letter $kind="zeros">000</Letter></Tool>
                <Divider $h={16} $tight />
                <Tool $w={12} aria-label="Aumentar casas decimais"><DecimalIcon /></Tool>
                <Tool $w={20} aria-label="Diminuir casas decimais"><DecimalIcon less /></Tool>
              </Row>
            </Stack>
          </GroupBody>
          <GroupLabel><span>Número</span><LaunchButton of="número" /></GroupLabel>
        </Group>

        <Group $w={158}>
          <GroupBody>
            <BigTool $w={60}><ConditionalIcon /><span>Formatação</span><span>Condicional<Chevron /></span></BigTool>
            <BigTool $w={52}><TableFormatIcon /><span>Formatar como</span><span>Tabela<Chevron /></span></BigTool>
            <BigTool $w={44}><CellStyleIcon /><span>Estilos de</span><span>Célula<Chevron /></span></BigTool>
          </GroupBody>
          <GroupLabel><span>Estilos</span></GroupLabel>
        </Group>

        <Group $w={72}>
          <GroupBody>
            <Stack $dense $pad={7}>
              <TextTool $dense $w={49}><CellsIcon kind="insert" />Inserir<Chevron /></TextTool>
              <TextTool $dense $w={49}><CellsIcon kind="delete" />Excluir<Chevron /></TextTool>
              <TextTool $dense $w={53}><CellsIcon kind="format" />Formatar<Chevron /></TextTool>
            </Stack>
          </GroupBody>
          <GroupLabel><span>Células</span></GroupLabel>
        </Group>

        <Group $w={124}>
          <GroupBody>
            <Stack $dense $pad={6}>
              <Row $h={17}><Tool $w={14} aria-label="Soma"><SigmaIcon /></Tool><Drop of="soma" w={10} /></Row>
              <Row $h={17}><Tool $w={14} aria-label="Preencher"><FillDownIcon /></Tool><Drop of="preencher" w={10} /></Row>
              <Row $h={17}><Tool $w={14} aria-label="Limpar"><EraserIcon /></Tool><Drop of="limpar" w={10} /></Row>
            </Stack>
            <BigTool $w={42}><SortFilterIcon /><span>Classificar</span><span>e Filtrar<Chevron /></span></BigTool>
            <BigTool $w={46}><SearchIcon size={20} /><span>Localizar e</span><span>Selecionar<Chevron /></span></BigTool>
          </GroupBody>
          <GroupLabel><span>Edição</span></GroupLabel>
        </Group>

        <Group $w={60}>
          <GroupBody>
            <BigTool $w={60}><AddinsIcon /><span>Suplementos</span></BigTool>
          </GroupBody>
          <GroupLabel><span>Suplementos</span></GroupLabel>
        </Group>
        <Collapse aria-label="Recolher faixa"><Chevron s={8} /></Collapse>
      </Ribbon>

      <FormulaBar>
        <Field $w={67}><input aria-label="Caixa de nome" defaultValue="L6" /><Chevron s={7} /></Field>
        <Grip><DotsIcon /></Grip>
        <FormulaActions $w={57}><CloseIcon s={9} /><CheckIcon /><Fx>fx</Fx><Chevron s={7} /></FormulaActions>
        <Field><input aria-label="Barra de fórmulas" /><Chevron s={7} /></Field>
      </FormulaBar>

      <Workspace>
        <Sheet>
          <ColumnHeads>
            <Corner><svg width="9" height="9" viewBox="0 0 9 9" fill="#d3d3d3"><path d="M9 0v9H0z" /></svg></Corner>
            {columns.map((name) => <ColumnHead key={name} $w={columnWidth(name)}>{name}</ColumnHead>)}
          </ColumnHeads>
          <Body>
            <RowHeads>
              {Array.from({ length: 25 }, (_, i) => <RowHead key={i}>{i + 1}</RowHead>)}
            </RowHeads>
            <Cells>
              <Panel>
                <PanelTitle>PLANILHA DE CONTROLE DE ESTOQUE</PanelTitle>
                <PanelGrid>
                  {panelButtons.map(([name, size]) => <PanelButton key={name} $size={size}>{name}</PanelButton>)}
                </PanelGrid>
              </Panel>
              <Credit>Desenvolvido por: exceleasy.com.br</Credit>
            </Cells>
          </Body>
        </Sheet>
        <VScroll>
          <Triangle d="M3 .5 5.8 5.5H.2z" />
          <VTrack><VThumb /></VTrack>
          <Triangle d="M3 5.5.2.5h5.600z" />
        </VScroll>
      </Workspace>

      <SheetBar>
        <Arrow aria-label="Planilha anterior"><SideArrow /></Arrow>
        <Arrow aria-label="Próxima planilha"><SideArrow right /></Arrow>
        <SheetTab $w={39} $on><span>MENU</span></SheetTab>
        {sheetTabs.map(([name, w]) => <SheetTab key={name} $w={w}>{name}</SheetTab>)}
        <SheetTools>
          <BarButton aria-label="Nova planilha"><PlusIcon /></BarButton>
          <BarButton aria-label="Redimensionar"><DotsIcon /></BarButton>
          <HScroll>
            <Triangle d="M.5 3 5.5.2v5.600z" />
            <HTrack><HThumb /></HTrack>
            <Triangle d="M5.5 3 .5.2v5.600z" />
          </HScroll>
        </SheetTools>
      </SheetBar>

      <StatusBar>
        <MacroIcon />
        <Accessibility><PersonIcon />Acessibilidade: investigar</Accessibility>
        <Views>
          <ViewButton $on aria-label="Normal"><ViewIcon kind="grid" /></ViewButton>
          <ViewButton aria-label="Layout da página"><ViewIcon kind="page" /></ViewButton>
          <ViewButton aria-label="Quebra de página"><ViewIcon kind="break" /></ViewButton>
        </Views>
        <Zoom>
          <ZoomStep aria-label="Reduzir">−</ZoomStep>
          <input type="range" min="0" max="100" defaultValue="52" aria-label="Zoom" />
          <ZoomStep aria-label="Ampliar">+</ZoomStep>
          <ZoomValue>110%</ZoomValue>
        </Zoom>
      </StatusBar>
    </Window>
  );
}
